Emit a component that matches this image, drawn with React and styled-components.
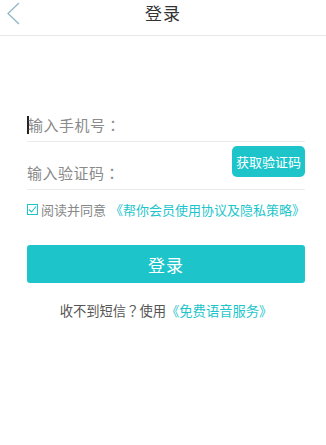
import React from "react";
import styled, { createGlobalStyle } from "styled-components";

const Global = createGlobalStyle`
  html, body { margin: 0; padding: 0; background: #fff; }
  body { font-family: "Noto Sans CJK SC", "Noto Sans", sans-serif; }
  * { box-sizing: border-box; }
`;

const TEAL = "#1dc5ca";

const Page = styled.div`
  width: 326px;
  height: 445px;
  background: #fff;
  display: flex;
  flex-direction: column;
`;

const Header = styled.div`
  height: 36px;
  border-bottom: 1px solid #e8e8e8;
  display: flex;
  align-items: center;
  justify-content: center;
  position: relative;
`;

const Back = styled.div`
  position: absolute;
  left: 6px;
  top: 1px;
  width: 16px;
  height: 24px;
`;

const Title = styled.div`
  font-size: 17px;
  color: #333;
  margin-top: -11px;
  letter-spacing: 1px;
`;

const Form = styled.div`
  padding: 73px 21px 0 27px;
  display: flex;
  flex-direction: column;
`;

const Field = styled.div`
  height: ${(p) => p.h}px;
  border-bottom: 1px solid #ececec;
  display: flex;
  align-items: flex-end;
  justify-content: space-between;
  padding-bottom: ${(p) => p.pb}px;
`;

const Placeholder = styled.div`
  font-size: 15px;
  color: #8a8a8a;
  line-height: 20px;
  display: flex;
  align-items: center;
  letter-spacing: 0.5px;
`;

const Punct = styled.span`
  font-family: "Noto Sans CJK TC", sans-serif;
`;

const Cursor = styled.span`
  display: inline-block;
  width: 2px;
  height: 18px;
  background: #222;
  margin-right: -1px;
`;

const CodeButton = styled.button`
  width: 73px;
  height: 31px;
  border: none;
  border-radius: 5px;
  background: ${TEAL};
  color: #fff;
  font-family: inherit;
  font-size: 13px;
  padding: 0;
  margin-bottom: 6px;
  white-space: nowrap;
`;

const Agree = styled.div`
  display: flex;
  align-items: center;
  margin-top: 10px;
  font-size: 13px;
  color: #888;
  white-space: nowrap;
`;

const Box = styled.span`
  width: 11px;
  height: 11px;
  border: 1px solid ${TEAL};
  margin-right: 3px;
  display: inline-flex;
  align-items: center;
  justify-content: center;
`;

const Link = styled.span`
  color: ${TEAL};
  margin-left: ${(p) => p.gap || 0}px;
`;

const LoginButton = styled.button`
  margin-top: 26px;
  height: 38px;
  width: 278px;
  border: none;
  border-radius: 3px;
  background: ${TEAL};
  color: #fff;
  font-family: inherit;
  font-size: 17px;
  letter-spacing: 1px;
`;

const Foot = styled.div`
  margin-top: 18px;
  text-align: center;
  font-size: 13.3px;
  color: #555;
  width: 278px;
`;

export default function App() {
  return (
    <Page>
      <Global />
      <Header>
        <Back>
          <svg width="16" height="24" viewBox="0 0 16 24">
            <path d="M13 2 L2 12.5 L13 23" fill="none" stroke="#8fb8c4" strokeWidth="1.3" />
          </svg>
        </Back>
        <Title>登录</Title>
      </Header>
      <Form>
        <Field h={33} pb={6}>
          <Placeholder>
            <Cursor />
            输入手机号<Punct>：</Punct>
          </Placeholder>
        </Field>
        <Field h={48} pb={6}>
          <Placeholder>
            输入验证码<Punct>：</Punct>
          </Placeholder>
          <CodeButton>获取验证码</CodeButton>
        </Field>
        <Agree>
          <Box>
            <svg width="9" height="9" viewBox="0 0 9 9">
              <path d="M1 4.5 L3.5 7 L8 1.5" fill="none" stroke={TEAL} strokeWidth="1.1" />
            </svg>
          </Box>
          阅读并同意<Link gap={4}>《帮你会员使用协议及隐私策略》</Link>
        </Agree>
        <LoginButton>登录</LoginButton>
        <Foot>
          收不到短信<Punct>？</Punct>使用<Link>《免费语音服务》</Link>
        </Foot>
      </Form>
    </Page>
  );
}
